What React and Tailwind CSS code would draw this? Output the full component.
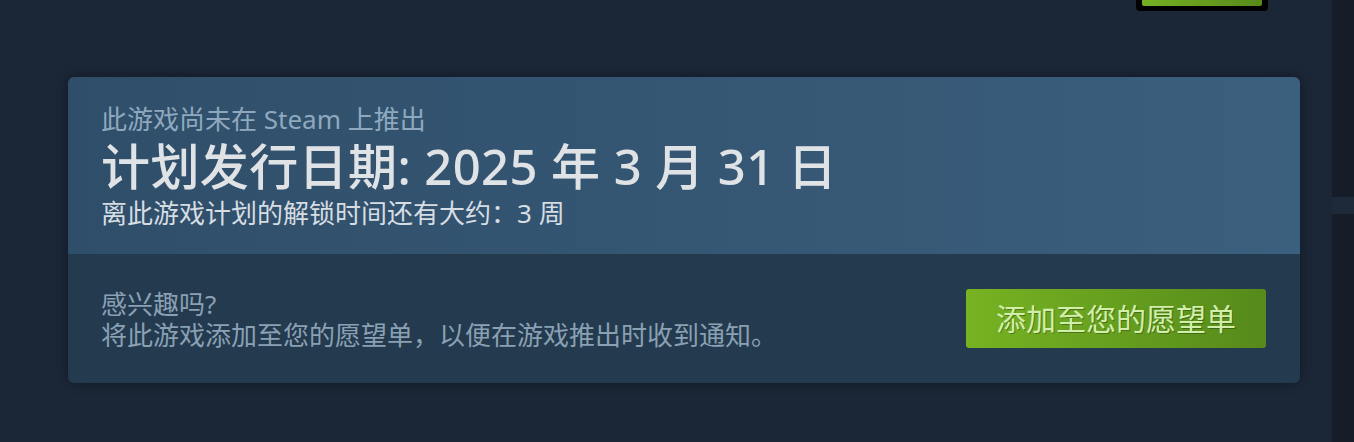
import React from 'react';

const font = { fontFamily: '"Noto Sans", "Noto Sans CJK SC", sans-serif' };

const ComingSoon = () => {
    return (
        <div className="flex min-h-[442px] w-full bg-[#1b2637]" style={font}>
            {/* Main column */}
            <div className="flex flex-1 flex-col pl-[68px] pr-[32px]">
                {/* Bit of the purchase button peeking from above */}
                <div className="flex h-[77px] justify-end pr-[32px]">
                    <div className="h-[11px] w-[132px] rounded-b-[4px] bg-black px-[6px] pb-[5px]">
                        <div className="h-full rounded-b-[2px] bg-gradient-to-r from-[#75b022] to-[#588a1b]" />
                    </div>
                </div>

                {/* Release card */}
                <div className="overflow-hidden rounded-[6px] shadow-[0_0_12px_rgba(0,0,0,0.35)]">
                    <div className="flex h-[177px] flex-col bg-gradient-to-r from-[#2f4e69] to-[#3b5f7e] px-[33px] pt-[27px]">
                        <div className="text-[26px] leading-[30px] text-[#8ea9bf]">此游戏尚未在 Steam 上推出</div>
                        <h1 className="text-[49px] font-medium leading-[64px] tracking-[0.4px] text-[#dfe3e6]">计划发行日期: 2025 年 3 月 31 日</h1>
                        <div className="text-[26px] leading-[30px] text-[#d6dde3]">离此游戏计划的解锁时间还有大约：3 周</div>
                    </div>
                    <div className="flex h-[129px] items-center justify-between bg-[#233a4f] pl-[33px] pr-[34px]">
                        <div className="pt-[2px] text-[26px] leading-[31px] text-[#8aa0b3]">
                            <div>感兴趣吗?</div>
                            <div>将此游戏添加至您的愿望单，以便在游戏推出时收到通知。</div>
                        </div>
                        <button className="flex h-[59px] w-[300px] items-center justify-center rounded-[3px] bg-gradient-to-r from-[#77b322] to-[#568a1b] text-[30px] text-[#d2efa9] [text-shadow:1px_1px_0_rgba(0,0,0,0.3)]">
                            添加至您的愿望单
                        </button>
                    </div>
                </div>
            </div>

            {/* Right strip */}
            <div className="flex w-[22px] flex-col bg-[#161d28]">
                <div className="h-[197px]" />
                <div className="h-[17px] bg-[#1e2a3a]" />
            </div>
        </div>
    );
};

export default function App() {
    return <ComingSoon />;
}
